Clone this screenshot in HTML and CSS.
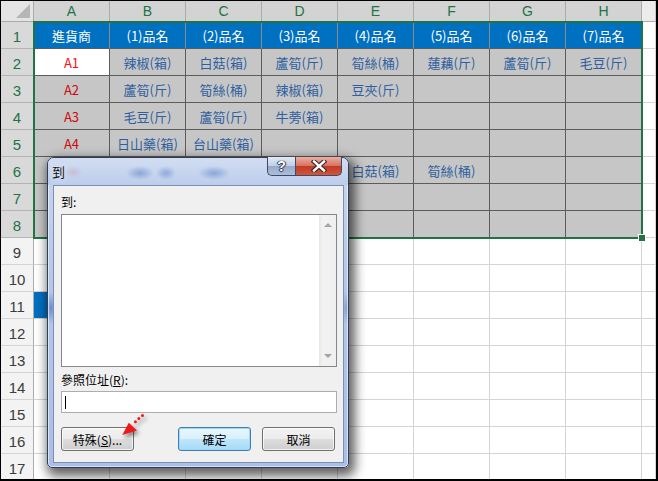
FILE: index.html
```html
<!DOCTYPE html>
<html lang="zh-Hant">
<head>
<meta charset="utf-8">
<title>到</title>
<link rel="stylesheet" href="styles.css">
</head>
<body>
<div class="screen">
  <div class="sheet">
    <div class="corner"></div>
    <div class="ch sel">A</div><div class="ch sel">B</div><div class="ch sel">C</div><div class="ch sel">D</div><div class="ch sel">E</div><div class="ch sel">F</div><div class="ch sel">G</div><div class="ch sel">H</div><div class="ch"></div>

    <div class="rh sel">1</div>
    <div class="c hd">進貨商</div><div class="c hd">(1)品名</div><div class="c hd">(2)品名</div><div class="c hd">(3)品名</div><div class="c hd">(4)品名</div><div class="c hd">(5)品名</div><div class="c hd">(6)品名</div><div class="c hd hd-last">(7)品名</div><div class="c"></div>

    <div class="rh sel">2</div>
    <div class="c act red">A1</div><div class="c s">辣椒(箱)</div><div class="c s">白菇(箱)</div><div class="c s">蘆筍(斤)</div><div class="c s">筍絲(桶)</div><div class="c s">蓮藕(斤)</div><div class="c s">蘆筍(斤)</div><div class="c s">毛豆(斤)</div><div class="c"></div>

    <div class="rh sel">3</div>
    <div class="c s dred">A2</div><div class="c s">蘆筍(斤)</div><div class="c s">筍絲(桶)</div><div class="c s">辣椒(箱)</div><div class="c s">豆夾(斤)</div><div class="c s"></div><div class="c s"></div><div class="c s"></div><div class="c"></div>

    <div class="rh sel">4</div>
    <div class="c s dred">A3</div><div class="c s">毛豆(斤)</div><div class="c s">蘆筍(斤)</div><div class="c s">牛蒡(箱)</div><div class="c s"></div><div class="c s"></div><div class="c s"></div><div class="c s"></div><div class="c"></div>

    <div class="rh sel">5</div>
    <div class="c s dred">A4</div><div class="c s">日山藥(箱)</div><div class="c s">台山藥(箱)</div><div class="c s"></div><div class="c s"></div><div class="c s"></div><div class="c s"></div><div class="c s"></div><div class="c"></div>

    <div class="rh sel">6</div>
    <div class="c s dred">A5</div><div class="c s"></div><div class="c s"></div><div class="c s"></div><div class="c s">白菇(箱)</div><div class="c s">筍絲(桶)</div><div class="c s"></div><div class="c s"></div><div class="c"></div>

    <div class="rh sel">7</div>
    <div class="c s"></div><div class="c s"></div><div class="c s"></div><div class="c s"></div><div class="c s"></div><div class="c s"></div><div class="c s"></div><div class="c s"></div><div class="c"></div>

    <div class="rh sel">8</div>
    <div class="c s"></div><div class="c s"></div><div class="c s"></div><div class="c s"></div><div class="c s"></div><div class="c s"></div><div class="c s"></div><div class="c s"></div><div class="c"></div>

    <div class="rh">9</div>
    <div class="c"></div><div class="c"></div><div class="c"></div><div class="c"></div><div class="c"></div><div class="c"></div><div class="c"></div><div class="c"></div><div class="c"></div>

    <div class="rh">10</div>
    <div class="c"></div><div class="c"></div><div class="c"></div><div class="c"></div><div class="c"></div><div class="c"></div><div class="c"></div><div class="c"></div><div class="c"></div>

    <div class="rh">11</div>
    <div class="c blue"></div><div class="c"></div><div class="c"></div><div class="c"></div><div class="c"></div><div class="c"></div><div class="c"></div><div class="c"></div><div class="c"></div>

    <div class="rh">12</div>
    <div class="c"></div><div class="c"></div><div class="c"></div><div class="c"></div><div class="c"></div><div class="c"></div><div class="c"></div><div class="c"></div><div class="c"></div>

    <div class="rh">13</div>
    <div class="c"></div><div class="c"></div><div class="c"></div><div class="c"></div><div class="c"></div><div class="c"></div><div class="c"></div><div class="c"></div><div class="c"></div>

    <div class="rh">14</div>
    <div class="c"></div><div class="c"></div><div class="c"></div><div class="c"></div><div class="c"></div><div class="c"></div><div class="c"></div><div class="c"></div><div class="c"></div>

    <div class="rh">15</div>
    <div class="c"></div><div class="c"></div><div class="c"></div><div class="c"></div><div class="c"></div><div class="c"></div><div class="c"></div><div class="c"></div><div class="c"></div>

    <div class="rh">16</div>
    <div class="c"></div><div class="c"></div><div class="c"></div><div class="c"></div><div class="c"></div><div class="c"></div><div class="c"></div><div class="c"></div><div class="c"></div>

    <div class="rh">17</div>
    <div class="c"></div><div class="c"></div><div class="c"></div><div class="c"></div><div class="c"></div><div class="c"></div><div class="c"></div><div class="c"></div><div class="c"></div>

    <div class="selection"><span class="handle"></span></div>
  </div>

  <div class="dialog">
    <div class="titlebar">
      <span class="title">到</span>
      <div class="capbtns">
        <span class="help">?</span>
        <span class="close">
          <svg width="16" height="12" viewBox="0 0 16 12"><path d="M3 1.5 L13 10.5 M13 1.5 L3 10.5" stroke="#3a2a2a" stroke-width="4.6" stroke-linecap="square"/><path d="M3 1.5 L13 10.5 M13 1.5 L3 10.5" stroke="#ffffff" stroke-width="2.4" stroke-linecap="square"/></svg>
        </span>
      </div>
    </div>
    <div class="client">
      <div class="label">到:</div>
      <div class="listbox">
        <div class="scrollbar">
          <span class="arrow up"></span>
          <span class="arrow down"></span>
        </div>
      </div>
      <div class="label ref">參照位址(<u>R</u>):</div>
      <div class="input"><span class="caret"></span></div>
      <div class="btnrow">
        <span class="btn special">特殊(<u>S</u>)...</span>
        <span class="btn default">確定</span>
        <span class="btn">取消</span>
      </div>
    </div>
  </div>

  <svg class="pointer" width="40" height="34" viewBox="0 0 40 34">
    <circle cx="28.5" cy="6.5" r="1.5" fill="#f01818"/>
    <circle cx="24.8" cy="9.6" r="1.5" fill="#f01818"/>
    <circle cx="21.4" cy="12.8" r="1.5" fill="#f01818"/>
    <polygon points="8.3,26 14.8,13.8 23,21.6" fill="#f01818"/>
  </svg>
</div>
</body>
</html>
```

FILE: styles.css
```css
body {
  margin: 0;
  background: #fff;
}

.screen {
  position: relative;
  width: 658px;
  height: 481px;
  box-sizing: border-box;
  border: 1px solid #000;
  border-right-width: 2px;
  border-bottom-width: 2px;
  overflow: hidden;
  background: #fff;
  font-family: "Noto Sans CJK TC", "Noto Sans", sans-serif;
}

/* ---------- spreadsheet ---------- */
.sheet {
  position: relative;
  display: grid;
  grid-template-columns: 33px repeat(8, 76px) 1fr;
  grid-template-rows: 21px;
  grid-auto-rows: 27px;
}

.sheet > div {
  box-sizing: border-box;
  display: flex;
  align-items: center;
  justify-content: center;
  white-space: nowrap;
}

.corner {
  position: relative;
  background: #e4e4e4;
  border-right: 1px solid #ababab;
  border-bottom: 1px solid #ababab;
}
.corner::after {
  content: "";
  position: absolute;
  right: 3px;
  bottom: 3px;
  width: 14px;
  height: 14px;
  background: #b6b6b6;
  clip-path: polygon(100% 0, 100% 100%, 0 100%);
}

.ch {
  background: #ececec;
  border-right: 1px solid #c6c6c6;
  border-bottom: 1px solid #ababab;
  font-family: "Liberation Sans", Arial, sans-serif;
  font-size: 14px;
  color: #444;
}
.ch.sel {
  background: #d3d3d3;
  border-right-color: #ababab;
  color: #217346;
}

.rh {
  background: #f3f3f3;
  border-right: 1px solid #ababab;
  border-bottom: 1px solid #d4d4d4;
  font-family: "Liberation Sans", Arial, sans-serif;
  font-size: 15px;
  color: #3c3c3c;
  padding-top: 3px;
}
.rh.sel {
  background: #d9d9d9;
  border-bottom-color: #b4b4b4;
  color: #217346;
}

.c {
  border-right: 1px solid #d4d4d4;
  border-bottom: 1px solid #d4d4d4;
  font-size: 13px;
  color: #2f5f9f;
}
.c.s {
  background: #c6c6c6;
  border-right-color: #5c5c5c;
  border-bottom-color: #5c5c5c;
}
.c.hd {
  background: #0070c0;
  color: #fff;
  border-right-color: #8c8a86;
  border-bottom-color: #5c5c5c;
}
.c.act {
  background: #fff;
  border-right-color: #5c5c5c;
  border-bottom-color: #5c5c5c;
}
.c.red { color: #ff1010; }
.c.dred { color: #cc0a0a; }
.c.blue { background: #0070c0; }

/* selection outline: overlays cells A1:H8 via its grid area */
.sheet > .selection {
  position: absolute;
  grid-row: 2 / 10;
  grid-column: 2 / 10;
  inset: -1px;
  border: 2px solid #217346;
  pointer-events: none;
}
.handle {
  position: absolute;
  right: -5px;
  bottom: -5px;
  width: 6px;
  height: 6px;
  background: #217346;
  border: 1px solid #fff;
}

/* ---------- dialog ---------- */
.dialog {
  position: absolute;
  left: 46px;
  top: 156px;
  width: 302px;
  height: 311px;
  box-sizing: border-box;
  border: 1px solid #303c52;
  border-radius: 7px 7px 5px 5px;
  padding: 0 4px 4px 5px;
  display: flex;
  flex-direction: column;
  background:
    radial-gradient(ellipse 5px 16px at 3px 150px, rgba(40, 90, 180, 0.55), transparent),
    radial-gradient(ellipse 4px 16px at 298px 150px, rgba(40, 90, 180, 0.35), transparent),
    linear-gradient(180deg, #c9d7ef 0%, #b4c7ea 40%, #aabfe8 100%);
  box-shadow: 3px 5px 11px 3px rgba(0, 0, 0, 0.62), inset 0 0 0 1px rgba(255, 255, 255, 0.55);
}

.titlebar {
  height: 27px;
  display: flex;
  align-items: flex-start;
  justify-content: space-between;
  margin: 0 -4px 0 -5px;
  padding: 0 6px 0 4px;
  border-radius: 6px 6px 0 0;
  background:
    radial-gradient(ellipse 14px 7px at 92px 15px, rgba(100, 135, 200, 0.6), transparent),
    radial-gradient(ellipse 10px 7px at 118px 15px, rgba(100, 135, 200, 0.55), transparent),
    radial-gradient(ellipse 16px 7px at 166px 15px, rgba(100, 135, 200, 0.6), transparent),
    radial-gradient(ellipse 10px 6px at 25px 14px, rgba(210, 120, 140, 0.25), transparent),
    linear-gradient(180deg, #d2ddf1 0%, #bccdec 100%);
}

.title {
  margin-top: 6px;
  font-size: 13px;
  line-height: 16px;
  color: #111;
  text-shadow: 0 0 6px rgba(255, 255, 255, 0.9);
}

.capbtns {
  display: flex;
  margin-top: -1px;
  height: 19px;
}
.help,
.close {
  box-sizing: border-box;
  height: 19px;
  display: flex;
  align-items: center;
  justify-content: center;
  border: 1px solid #3b4a66;
  border-top: none;
}
.help {
  width: 28px;
  border-right: none;
  border-radius: 0 0 0 5px;
  background: linear-gradient(180deg, #e3eaf5 0%, #c2cfe4 48%, #98aacb 52%, #aebfdc 100%);
  font-family: "Liberation Sans", Arial, sans-serif;
  font-weight: bold;
  font-size: 14px;
  color: #fff;
  text-shadow: 0 0 1px #2b3448, 1px 0 1px #2b3448, -1px 0 1px #2b3448, 0 1px 1px #2b3448;
}
.close {
  width: 47px;
  border-radius: 0 0 5px 0;
  background: linear-gradient(180deg, #eab0a3 0%, #d9725f 48%, #c23a25 52%, #d0563c 100%);
}

.client {
  flex: 1;
  box-sizing: border-box;
  border: 1px solid #7c8fb0;
  background: #f0f0f0;
  padding: 8px 6px 0 7px;
  display: flex;
  flex-direction: column;
  font-size: 12px;
  color: #000;
}

.label {
  height: 16px;
  line-height: 16px;
}
.label.ref {
  margin-top: 5px;
}

.listbox {
  margin-top: 4px;
  height: 153px;
  box-sizing: border-box;
  border: 1px solid #828790;
  background: #fff;
  display: flex;
  justify-content: flex-end;
}
.scrollbar {
  width: 17px;
  background: linear-gradient(90deg, #e6e6e6 0%, #f2f2f2 20%, #efefef 100%);
  display: flex;
  flex-direction: column;
  justify-content: space-between;
  align-items: center;
  padding: 8px 0;
}
.arrow {
  width: 0;
  height: 0;
  border-left: 4px solid transparent;
  border-right: 4px solid transparent;
}
.arrow.up {
  border-bottom: 4px solid #a4a4a4;
}
.arrow.down {
  border-top: 4px solid #a4a4a4;
}

.input {
  margin-top: 3px;
  height: 22px;
  box-sizing: border-box;
  border: 1px solid #abadb3;
  background: #fff;
  padding: 4px 3px;
}
.caret {
  display: block;
  width: 1px;
  height: 13px;
  background: #000;
}

.btnrow {
  margin-top: 14px;
  display: flex;
  gap: 11px;
  padding-right: 2px;
}
.btn {
  width: 73px;
  height: 24px;
  box-sizing: border-box;
  border: 1px solid #707070;
  border-radius: 3px;
  background: linear-gradient(180deg, #f3f3f3 0%, #ebebeb 48%, #dddddd 52%, #cfcfcf 100%);
  box-shadow: inset 0 0 0 1px rgba(255, 255, 255, 0.7);
  display: flex;
  align-items: center;
  justify-content: center;
  font-size: 12px;
}
.btn.special {
  margin-right: auto;
}
.btn.default {
  border-color: #3c7fb1;
  box-shadow: inset 0 0 0 1px #9fd8f5;
  background: linear-gradient(180deg, #eaf6fd 0%, #d9f0fc 48%, #bee6fd 52%, #a7d9f5 100%);
}

/* ---------- red pointer ---------- */
.pointer {
  position: absolute;
  left: 113px;
  top: 408px;
  filter: drop-shadow(2px 3px 2px rgba(0, 0, 0, 0.45));
}
```
